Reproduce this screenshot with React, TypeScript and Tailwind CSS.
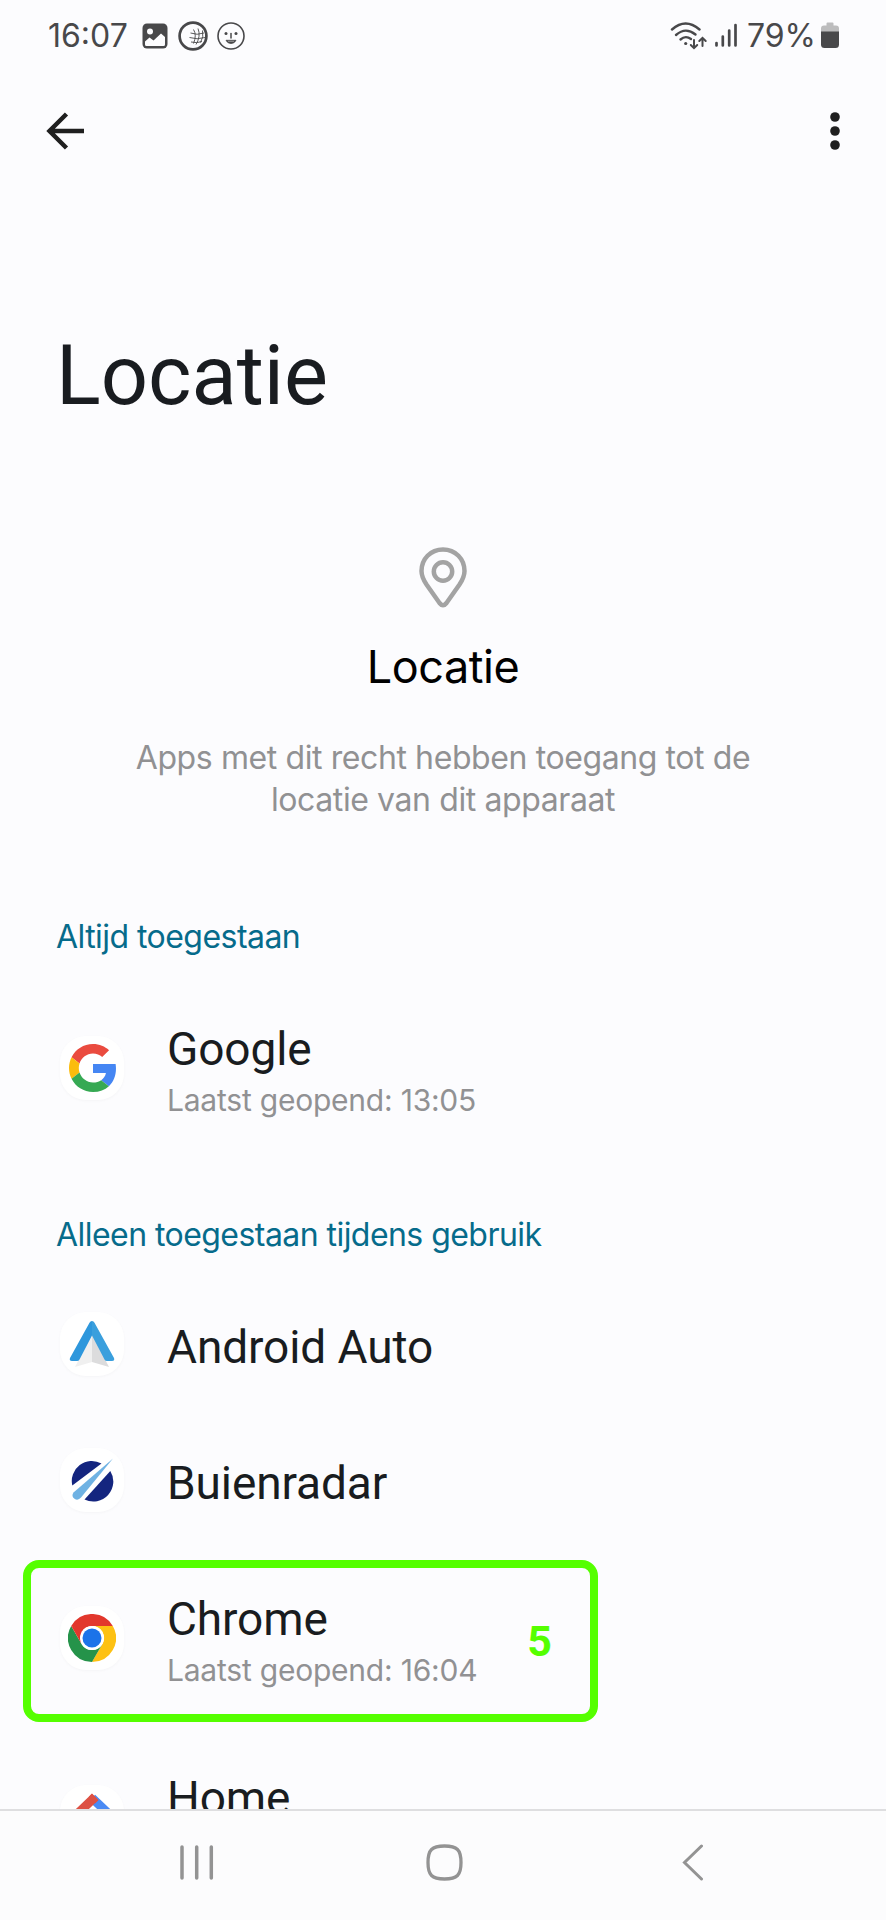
import clsx from 'clsx'
import { FC, ReactNode } from 'react'

interface AppRowProps {
  name: string
  icon: ReactNode
  lastOpened?: string
  tall?: boolean
  children?: ReactNode
}

const ImageIcon = () => (
  <svg className="w-[26px] h-[26px]" viewBox="0 0 26 26">
    <rect x="0.5" y="0.5" width="25" height="25" rx="4.5" fill="#48484a" />
    <path d="M3 18.5 7.5 14.5 11.5 17.5 19 10.5 23 14V21.5Q23 23 21.5 23H4.5Q3 23 3 21.5Z" fill="#fcfcfe" />
    <circle cx="8" cy="8.5" r="3" fill="#fcfcfe" />
  </svg>
)

const GlobeIcon = () => (
  <svg className="w-[30px] h-[30px]" viewBox="0 0 30 30" fill="none" stroke="#48484a">
    <circle cx="15" cy="15" r="13.4" strokeWidth="2.7" />
    <path d="M15.5 8.5Q19 14 15.5 22.5M20 7.5Q23 15 18 23.5M24.5 9.5Q26 16 22.5 21.5" strokeWidth="0.9" />
    <path d="M12.5 12Q19 14.5 26 12M11.5 16.5Q19 19 27 16.5M13 21Q19 22.5 24 20.5" strokeWidth="0.9" />
  </svg>
)

const FaceIcon = () => (
  <svg className="w-[28px] h-[28px]" viewBox="0 0 28 28" fill="none" stroke="#48484a">
    <circle cx="14" cy="14" r="13" strokeWidth="1.6" />
    <path d="M14 11.5V16" strokeWidth="1.5" strokeLinecap="round" />
    <circle cx="9" cy="11.5" r="1.5" fill="#48484a" stroke="none" />
    <circle cx="19" cy="11.5" r="1.5" fill="#48484a" stroke="none" />
    <path d="M9 18.3H19Q17.5 21.5 14 21.5T9 18.3Z" fill="#48484a" strokeWidth="0.8" strokeLinejoin="round" />
    <path d="M11 19.3H17" stroke="#b0b0b0" strokeWidth="0.8" />
  </svg>
)

const WifiIcon = () => (
  <svg className="w-[38px] h-[29px]" viewBox="0 0 38 29" fill="none" stroke="#48484a" strokeLinecap="round">
    <path d="M2 8.5Q15.5-3.5 29.5 8.5" strokeWidth="2.4" />
    <path d="M6 14Q15.5 5.5 25.5 13.5" strokeWidth="2.4" />
    <path d="M10.5 18.5Q15.5 14 21 18" strokeWidth="2.4" />
    <circle cx="15.7" cy="22.5" r="1.6" fill="#48484a" stroke="none" />
    <path d="M24 19V27M20.8 24 24 27.2 27.2 24M32.5 25V17M29.3 20 32.5 16.800 35.7 20" strokeWidth="2" />
  </svg>
)

const SignalIcon = () => (
  <svg className="w-[24px] h-[25px]" viewBox="0 0 24 25" stroke="#48484a" strokeWidth="2.7" strokeLinecap="round">
    <path d="M2.5 20V22.5M8.8 13.5V22.5M15.2 7.5V22.5M21.5 2V22.5" />
  </svg>
)

const BatteryIcon = () => (
  <svg className="w-[18px] h-[27px]" viewBox="0 0 18 27">
    <path d="M5.5 1.5Q5.5 0.5 6.5 0.5H11.5Q12.5 0.5 12.5 1.5V3.5H15Q18 3.5 18 6.5V10H0V6.5Q0 3.5 3 3.5H5.5Z" fill="#bcbcbd" />
    <path d="M0 9.5H18V22.5Q18 26 14.5 26H3.5Q0 26 0 22.5Z" fill="#48484a" />
  </svg>
)

const GoogleIcon = () => (
  <svg className="w-[47px] h-[48px]" viewBox="0 0 47 48">
    <path fill="#EA4B3F" d="M24 9.5c3.54 0 6.71 1.22 9.21 3.6l6.85-6.85C35.9 2.38 30.47 0 24 0 14.62 0 6.51 5.38 2.56 13.22l7.98 6.19C12.43 13.72 17.74 9.5 24 9.5z" />
    <path fill="#4586F3" d="M46.98 24.55c0-1.57-.15-3.09-.38-4.55H24v9.02h12.94c-.58 2.96-2.26 5.48-4.78 7.18l7.73 6c4.51-4.18 7.09-10.36 7.09-17.65z" />
    <path fill="#FBBC0D" d="M10.53 28.59c-.48-1.45-.76-2.99-.76-4.59s.27-3.14.76-4.59l-7.98-6.19C.92 16.46 0 20.12 0 24c0 3.88.92 7.54 2.56 10.78l7.97-6.19z" />
    <path fill="#36A953" d="M24 48c6.48 0 11.93-2.13 15.89-5.81l-7.73-6c-2.15 1.45-4.92 2.3-8.16 2.3-6.26 0-11.57-4.22-13.47-9.91l-7.98 6.19C6.51 42.62 14.62 48 24 48z" />
  </svg>
)

const AndroidAutoIcon = () => (
  <svg className="w-[46px] h-[48px]" viewBox="0 0 46 48">
    <path d="M23 14V42L6 47Z" fill="#f0f0f0" />
    <path d="M23 14V42L40 47Z" fill="#dcdcdd" />
    <path d="M20.5 2.8Q21.3 1 23 1V15.5L10.5 39.5Q9.7 41 8 41H3Q0 41 1 38Z" fill="#2e97dc" />
    <path d="M25.5 2.8Q24.7 1 23 1V15.5L35.5 39.5Q36.3 41 38 41H43Q46 41 45 38Z" fill="#3a9fdd" />
  </svg>
)

const BuienradarIcon = () => (
  <svg className="w-[44px] h-[44px]" viewBox="0 0 44 44">
    <path d="M2.300 27.500A20 20 0 0 1 31.500 5.500Z" fill="#14257f" />
    <path d="M40.300 13A20 20 0 0 1 14.500 41.500Z" fill="#14257f" />
    <path d="M43 .5 11 39.5Q8 43 4.500 40.800 1 38.200 3.500 34.500Z" fill="#6fb2e3" />
  </svg>
)

const ChromeIcon = () => (
  <svg className="w-[48px] h-[48px]" viewBox="0 0 48 48">
    <path d="M3.2 12A24 24 0 0 1 44.8 12H24A12 12 0 0 0 13.6 18Z" fill="#e2372c" />
    <path d="M44.8 12A24 24 0 0 1 24 48L34.4 30A12 12 0 0 0 24 12Z" fill="#fdc113" />
    <path d="M24 48A24 24 0 0 1 3.2 12L13.6 30A12 12 0 0 0 34.4 30Z" fill="#25934a" />
    <path d="M3.2 12 13.6 30 17 17Z" fill="#e2372c" />
    <circle cx="24" cy="24" r="12" fill="#fff" />
    <circle cx="24" cy="24" r="9.5" fill="#1b73e9" />
  </svg>
)

const HomeIcon = () => (
  <svg className="w-[48px] h-[48px]" viewBox="0 0 48 48" fill="none" strokeWidth="9">
    <path d="M24 5 43 23V43" stroke="#4a8af4" />
    <path d="M5 44V25L27 4" stroke="#dd5144" />
    <path d="M20.8 3.700 24 .5 30.500 7 27.300 10.200Z" fill="#dd5144" />
  </svg>
)

const AppRow: FC<AppRowProps> = ({ name, icon, lastOpened, tall, children }) => {
  return (
    <li className={clsx('relative flex shrink-0 pl-[60px]', tall ? 'h-[179px]' : 'h-[136px]')}>
      <div className="flex items-center w-[107px]">
        <div className="flex items-center justify-center size-16 rounded-[26px] bg-white shadow-[0_1px_3px_rgba(0,0,0,0.03)]">
          {icon}
        </div>
      </div>
      <div className="pt-11">
        <div className="text-[46px] leading-[54px] text-[#191c20] tracking-[-0.1px]">{name}</div>
        {lastOpened && (
          <div className="mt-1 font-[Inter] text-[30px] leading-[40px] tracking-[-0.22px] text-[#919193]">
            Laatst geopend: {lastOpened}
          </div>
        )}
      </div>
      {children}
    </li>
  )
}

const SectionTitle: FC<{ children: ReactNode }> = ({ children }) => (
  <h3 className="pt-[58px] pb-[21px] pl-14 font-[Inter] text-[32px] leading-[40px] tracking-[-0.55px] text-[#066b8b]">
    {children}
  </h3>
)

const StatusBar = () => (
  <div className="flex items-center justify-between h-[71px] px-[47px] font-[Inter] text-[32px] text-[#48484a]">
    <div className="flex items-center">
      <span className="w-[95px] pl-px">16:07</span>
      <ImageIcon />
      <span className="ml-[10px]">
        <GlobeIcon />
      </span>
      <span className="ml-[9px]">
        <FaceIcon />
      </span>
    </div>
    <div className="flex items-center">
      <WifiIcon />
      <span className="ml-[6px]">
        <SignalIcon />
      </span>
      <span className="ml-[9px] mr-[5px]">79%</span>
      <BatteryIcon />
    </div>
  </div>
)

const Toolbar = () => (
  <div className="flex items-center justify-between h-[119px] px-[46px]">
    <svg className="w-[38px] h-[38px]" viewBox="0 0 38 38" fill="none" stroke="#1f1f1f" strokeWidth="4.5">
      <path d="M38 19H4M20.5 2 3.5 19 20.5 36" />
    </svg>
    <svg className="w-[10px] h-[38px]" viewBox="0 0 10 38" fill="#1f1f1f">
      <circle cx="5" cy="5" r="4.8" />
      <circle cx="5" cy="19" r="4.8" />
      <circle cx="5" cy="33" r="4.8" />
    </svg>
  </div>
)

const NavigationBar = () => (
  <div className="flex h-[111px] pt-[33px] pl-[179px] border-t-2 border-[#dedee0] bg-[#fcfcfd]">
    <svg className="w-[36px] h-[37px]" viewBox="0 0 36 37" stroke="#939393" strokeWidth="3.5" strokeLinecap="round">
      <path d="M3 3V34M17.7 3V34M32.3 3V34" />
    </svg>
    <svg className="ml-[211px] w-[37px] h-[37px]" viewBox="0 0 37 37" fill="none" stroke="#939393" strokeWidth="3.3">
      <path d="M18.5 2Q28 2 31.5 5.5T35 18.5 31.500 31.5 18.5 35 5.5 31.5 2 18.5 5.5 5.5 18.5 2Z" />
    </svg>
    <svg className="ml-[219px] w-[22px] h-[37px]" viewBox="0 0 22 37" fill="none" stroke="#939393" strokeWidth="3" strokeLinecap="round">
      <path d="M19.5 2 2.5 18.5 19.5 35" />
    </svg>
  </div>
)

export default function App() {
  return (
    <div className="flex flex-col w-[886px] h-[1920px] overflow-hidden bg-[#fcfcfe] font-[Roboto]">
      <StatusBar />
      <Toolbar />

      <main className="flex-1 min-h-0 overflow-hidden">
        <h1 className="pt-[136px] pl-14 text-[83px] leading-[100px] text-[#191c20]">Locatie</h1>

        <div className="flex flex-col items-center pt-[121px] pb-[38px] font-[Inter]">
          <svg className="w-[48px] h-[61px]" viewBox="0 0 48 61" fill="none" stroke="#a3a3a3" strokeWidth="4.5">
            <path d="M24 2.5C11.5 2.5 2.5 12 2.5 24 2.5 29 4.5 33 7.5 37.5L20.5 56Q24 60.5 27.5 56L40.5 37.5C43.5 33 45.5 29 45.5 24 45.5 12 36.5 2.5 24 2.5Z" />
            <circle cx="24" cy="24.5" r="9.2" />
          </svg>
          <h2 className="mt-[31px] text-[45px] leading-[56px] tracking-[-0.45px] text-black">Locatie</h2>
          <p className="mt-[42px] text-center text-[32px] leading-[42px] tracking-[-0.4px] text-[#919193]">
            Apps met dit recht hebben toegang tot de
            <br />
            locatie van dit apparaat
          </p>
        </div>

        <SectionTitle>Altijd toegestaan</SectionTitle>
        <ul>
          <AppRow name="Google" icon={<GoogleIcon />} lastOpened="13:05" tall />
        </ul>

        <SectionTitle>Alleen toegestaan tijdens gebruik</SectionTitle>
        <ul className="flex flex-col">
          <AppRow name="Android Auto" icon={<AndroidAutoIcon />} />
          <AppRow name="Buienradar" icon={<BuienradarIcon />} />
          <AppRow name="Chrome" icon={<ChromeIcon />} lastOpened="16:04" tall>
            <div className="absolute left-[23px] top-[12px] flex items-center justify-end w-[575px] h-[162px] pr-[38px] border-8 border-[#55ff00] rounded-2xl text-[43px] font-bold text-[#55ff00]">
              5
            </div>
          </AppRow>
          <AppRow name="Home" icon={<HomeIcon />} tall />
        </ul>
      </main>

      <NavigationBar />
    </div>
  )
}
